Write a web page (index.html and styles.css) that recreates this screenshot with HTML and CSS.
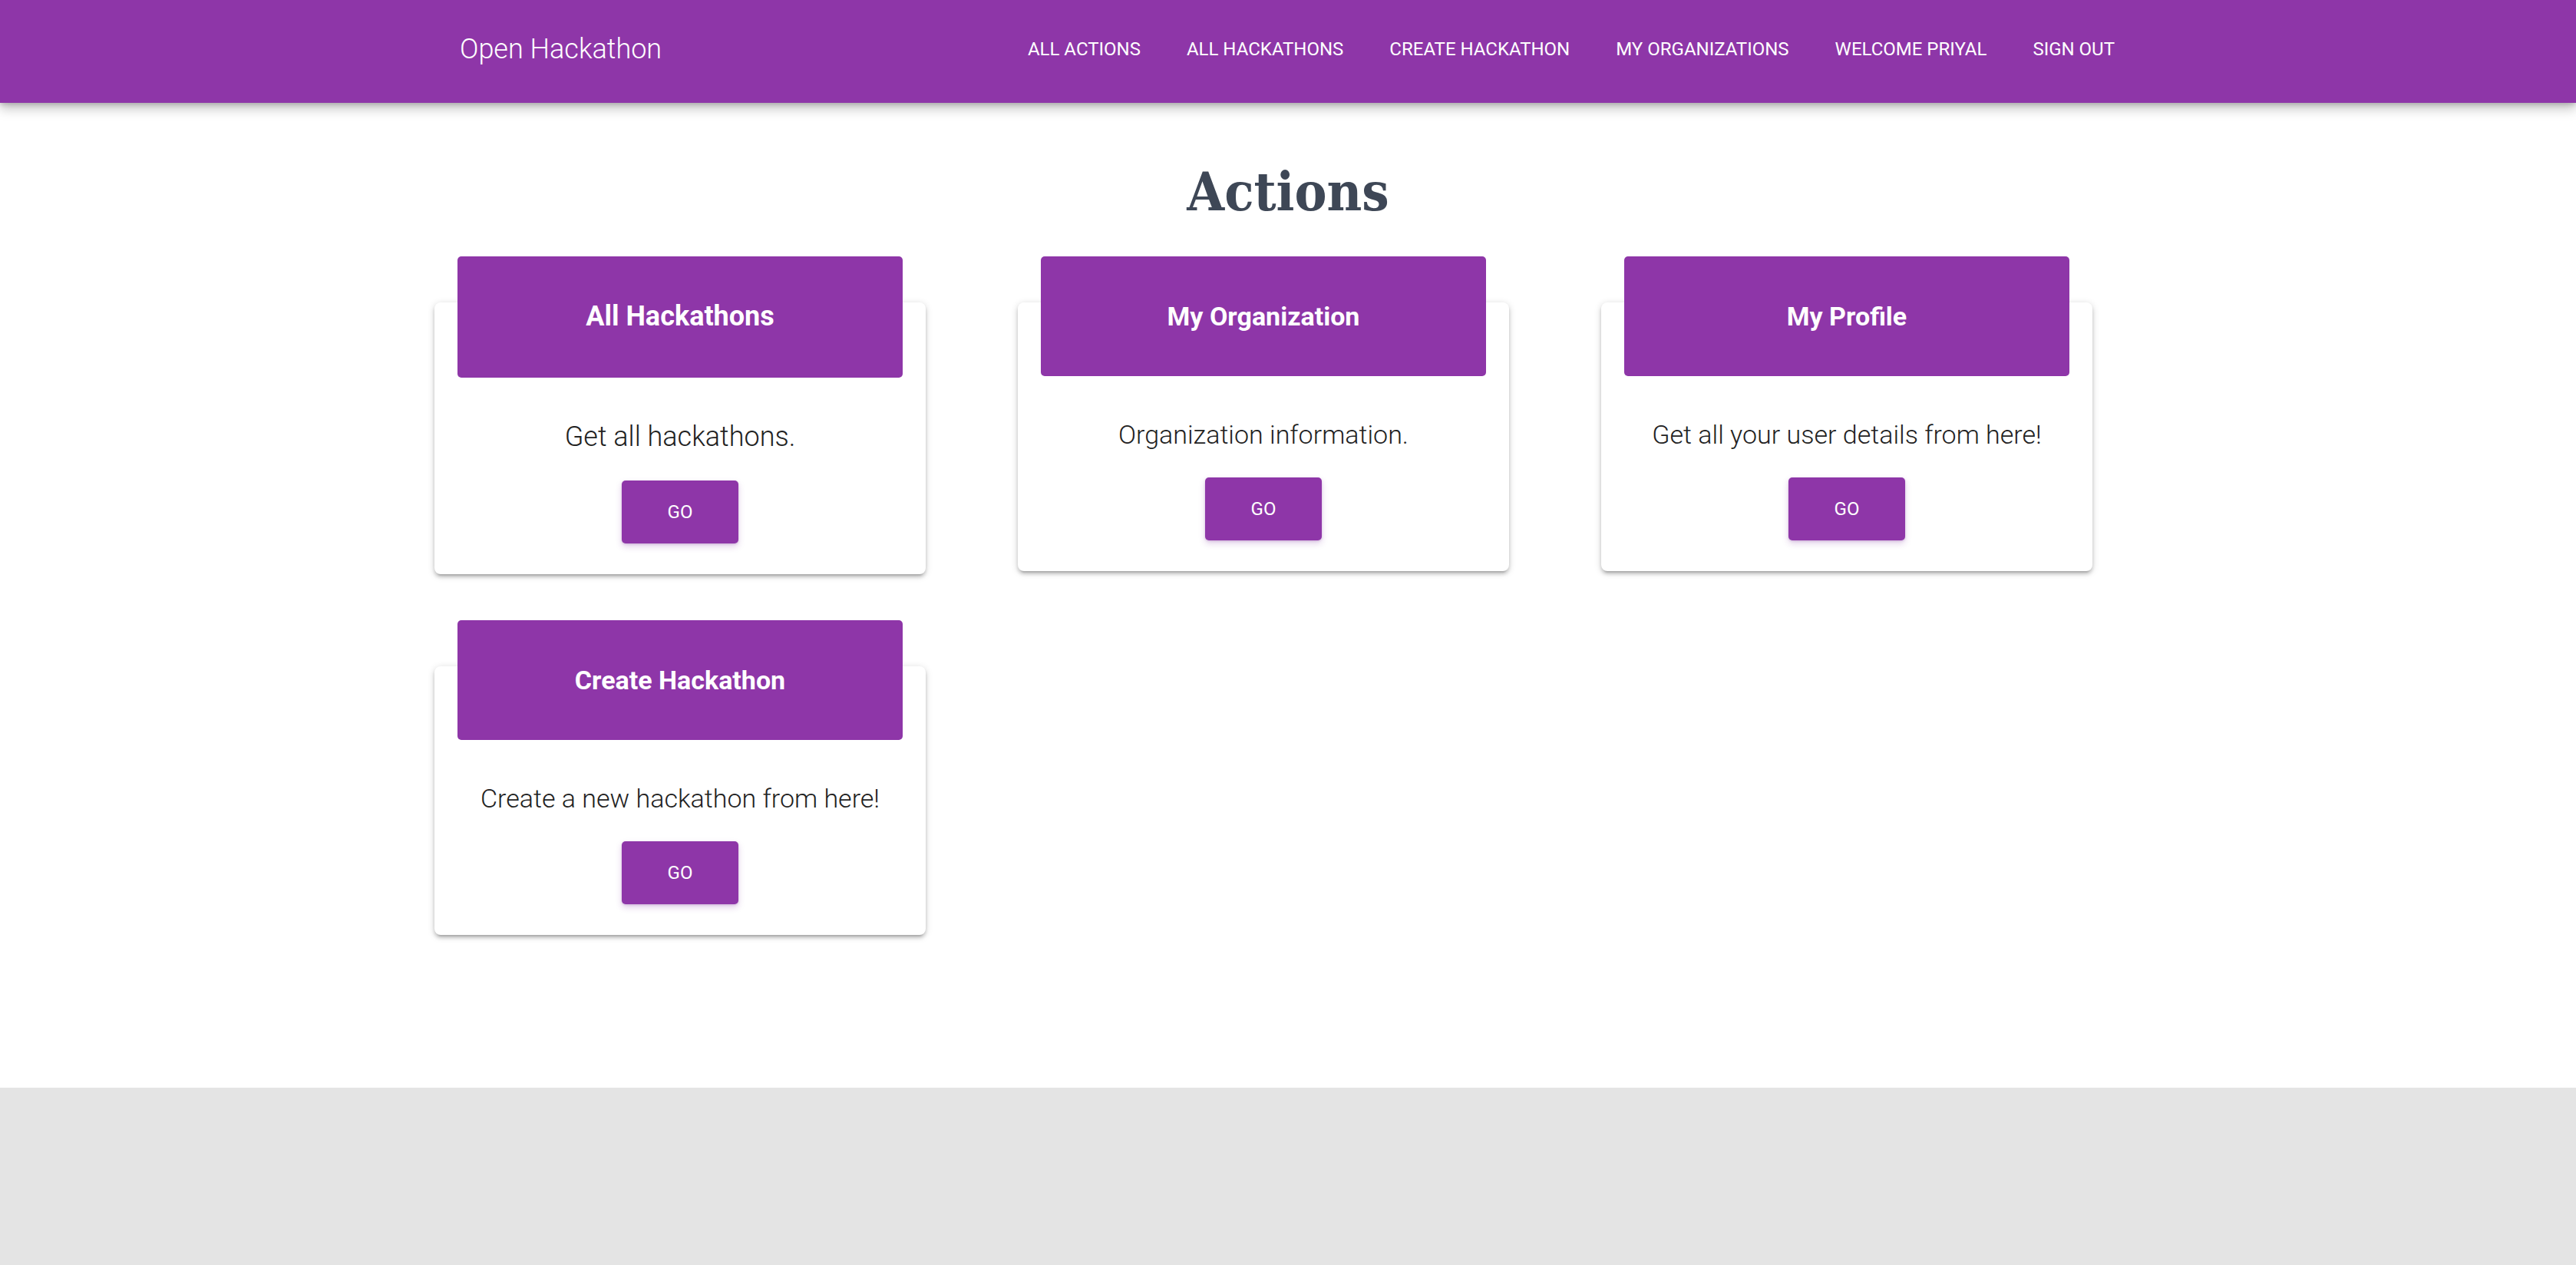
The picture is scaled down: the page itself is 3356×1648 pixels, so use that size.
FILE: index.html
```html
<!DOCTYPE html>
<html lang="en">
<head>
<meta charset="utf-8">
<title>Open Hackathon - Actions</title>
<link rel="stylesheet" href="styles.css">
</head>
<body>
<header class="navbar">
  <div class="nav-inner">
    <a class="brand" href="#">Open Hackathon</a>
    <ul class="nav-links">
      <li><a href="#">ALL ACTIONS</a></li>
      <li><a href="#">ALL HACKATHONS</a></li>
      <li><a href="#">CREATE HACKATHON</a></li>
      <li><a href="#">MY ORGANIZATIONS</a></li>
      <li><a href="#">WELCOME PRIYAL</a></li>
      <li><a href="#">SIGN OUT</a></li>
    </ul>
  </div>
</header>
<main class="main">
  <h1 class="page-title">Actions</h1>
  <div class="grid">
    <div class="card card--active">
      <div class="card-header"><h2 class="card-title">All Hackathons</h2></div>
      <p class="card-text">Get all hackathons.</p>
      <a class="btn" href="#">GO</a>
    </div>
    <div class="card">
      <div class="card-header"><h2 class="card-title">My Organization</h2></div>
      <p class="card-text">Organization information.</p>
      <a class="btn" href="#">GO</a>
    </div>
    <div class="card">
      <div class="card-header"><h2 class="card-title">My Profile</h2></div>
      <p class="card-text">Get all your user details from here!</p>
      <a class="btn" href="#">GO</a>
    </div>
    <div class="card">
      <div class="card-header"><h2 class="card-title">Create Hackathon</h2></div>
      <p class="card-text">Create a new hackathon from here!</p>
      <a class="btn" href="#">GO</a>
    </div>
  </div>
</main>
<footer class="footer"></footer>
</body>
</html>
```
FILE: styles.css
```css
* { box-sizing: border-box; }

html, body {
  margin: 0;
  padding: 0;
}

body {
  font-family: Roboto, "Noto Sans", "Liberation Sans", sans-serif;
  background: #ffffff;
  color: #212121;
}

a { text-decoration: none; color: inherit; }

.navbar {
  position: relative;
  z-index: 2;
  height: 134px;
  background: #8e36a8;
  box-shadow: 0 8px 14px rgba(0, 0, 0, 0.22), 0 2px 6px rgba(0, 0, 0, 0.18);
}

.nav-inner {
  display: flex;
  justify-content: space-between;
  align-items: flex-start;
  padding: 0 571px 0 599px;
  height: 128px;
}

.brand {
  color: #ffffff;
  font-size: 36px;
  font-weight: 300;
  line-height: 128px;
  white-space: nowrap;
}

.nav-links {
  display: flex;
  list-style: none;
  margin: 0;
  padding: 0;
}

.nav-links a {
  display: block;
  padding: 0 30px;
  color: #ffffff;
  font-size: 24px;
  font-weight: 400;
  line-height: 128px;
  white-space: nowrap;
}

.main {
  min-height: 1283px;
  padding-top: 81px;
}

.page-title {
  margin: 0;
  text-align: center;
  font-family: "DejaVu Serif", "Liberation Serif", serif;
  font-weight: 700;
  font-stretch: condensed;
  font-size: 70px;
  line-height: 70px;
  color: #3e4756;
}

.grid {
  width: 2284px;
  margin: 49px auto 0;
  padding-left: 30px;
  display: grid;
  grid-template-columns: repeat(3, 640px);
  column-gap: 120px;
  row-gap: 60px;
  align-items: start;
}

.card {
  margin-top: 60px;
  background: #ffffff;
  border-radius: 8px;
  box-shadow: 0 4px 4px rgba(0, 0, 0, 0.14), 0 6px 2px -4px rgba(0, 0, 0, 0.12), 0 2px 10px rgba(0, 0, 0, 0.18);
  display: flex;
  flex-direction: column;
  align-items: center;
  padding-bottom: 40px;
}

.card-header {
  align-self: stretch;
  margin: -60px 30px 0;
  height: 156px;
  background: #8e36a8;
  border-radius: 5px;
  display: flex;
  align-items: center;
  justify-content: center;
}

.card-title {
  margin: 0;
  color: #ffffff;
  font-size: 34px;
  font-weight: 700;
  line-height: 1.2;
}

.card-text {
  margin: 50px 0 0;
  font-size: 34px;
  font-weight: 300;
  line-height: 52px;
  color: #222222;
  text-align: center;
}

.card--active .card-header {
  height: 158px;
}

.card--active .card-title {
  font-size: 36px;
}

.card--active .card-text {
  margin-top: 51px;
  font-size: 36px;
  line-height: 53px;
}

.btn {
  margin-top: 30px;
  display: block;
  height: 82px;
  padding: 0 60px;
  line-height: 82px;
  background: #8e36a8;
  color: #ffffff;
  font-size: 24px;
  font-weight: 400;
  border-radius: 5px;
  box-shadow: 0 4px 8px rgba(120, 40, 150, 0.22), 0 1px 3px rgba(120, 40, 150, 0.2);
}

.footer {
  height: 231px;
  background: #e4e4e4;
}
```
